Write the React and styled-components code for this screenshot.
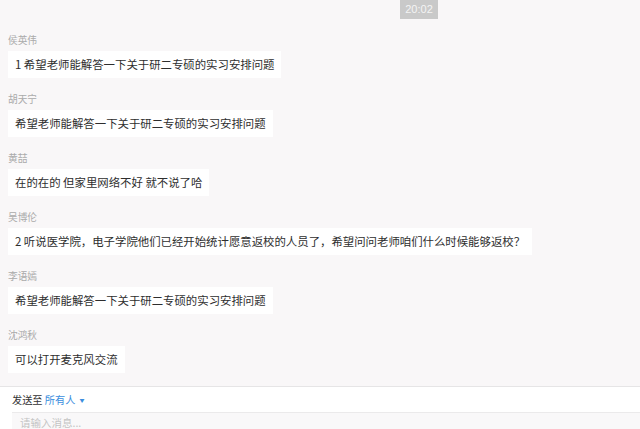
import React from 'react'
import styled, { createGlobalStyle } from 'styled-components'

const GlobalStyle = createGlobalStyle`
  html, body {
    margin: 0;
    padding: 0;
    background: #f9f7f8;
  }
  body {
    font-family: "Noto Sans CJK SC", "Noto Sans", sans-serif;
  }
`

// chat messages shown in the panel
const messages = [
  { name: '侯英伟', text: '1 希望老师能解答一下关于研二专硕的实习安排问题' },
  { name: '胡天宁', text: '希望老师能解答一下关于研二专硕的实习安排问题' },
  { name: '黄喆', text: '在的在的 但家里网络不好 就不说了哈' },
  { name: '吴博伦', text: '2 听说医学院，电子学院他们已经开始统计愿意返校的人员了，希望问问老师咱们什么时候能够返校？' },
  { name: '李语嫣', text: '希望老师能解答一下关于研二专硕的实习安排问题' },
  { name: '沈鸿秋', text: '可以打开麦克风交流' },
]

function App() {
  return (
    <Page>
      <GlobalStyle />
      <ChatArea>
        <TimeRow>
          <TimeBadge>20:02</TimeBadge>
        </TimeRow>
        {messages.map((m, i) => (
          <Message key={i}>
            <Name>{m.name}</Name>
            <Bubble>{m.text}</Bubble>
          </Message>
        ))}
      </ChatArea>
      <Footer>
        <SendTo>
          发送至 <Target>所有人</Target>
          <Caret>▼</Caret>
        </SendTo>
        <InputBox>请输入消息...</InputBox>
      </Footer>
    </Page>
  )
}

const Page = styled.div`
  width: 640px;
  height: 429px;
  display: flex;
  flex-direction: column;
  overflow: hidden;
  background: #f9f7f8;
`

const ChatArea = styled.div`
  display: flex;
  flex-direction: column;
  align-items: flex-start;
  gap: 14px;
  padding: 0 0 13px 8px;
`

const TimeRow = styled.div`
  align-self: stretch;
  display: flex;
  padding-left: 392px;
`

const TimeBadge = styled.div`
  width: 38px;
  height: 19px;
  background: #c9c9c9;
  color: #f4f4f4;
  font-family: "Liberation Sans", Arial, sans-serif;
  font-size: 11px;
  line-height: 19px;
  text-align: center;
`

const Message = styled.div`
  display: flex;
  flex-direction: column;
  align-items: flex-start;
  gap: 4px;
`

const Name = styled.div`
  font-size: 9.7px;
  line-height: 14px;
  color: #aaaaaa;
`

const Bubble = styled.div`
  background: #ffffff;
  height: 27px;
  padding: 0 7px;
  font-size: 11.4px;
  line-height: 27px;
  color: #2e2e2e;
  white-space: nowrap;
`

const Footer = styled.div`
  flex: 1;
  display: flex;
  flex-direction: column;
  background: #ffffff;
  border-top: 1px solid #e6e5e6;
`

const SendTo = styled.div`
  height: 25px;
  display: flex;
  align-items: center;
  padding-left: 12px;
  font-size: 10.2px;
  color: #333333;
  white-space: pre;
`

const Target = styled.span`
  color: #3b8ede;
`

const Caret = styled.span`
  color: #3b8ede;
  font-size: 5px;
  margin-left: 4px;
`

const InputBox = styled.div`
  flex: 1;
  margin-left: 12px;
  background: #f9f8f9;
  border-top: 1px solid #ebeaeb;
  padding: 3px 0 0 8px;
  font-size: 10.5px;
  line-height: 14px;
  color: #c4c4c4;
`

export default App
